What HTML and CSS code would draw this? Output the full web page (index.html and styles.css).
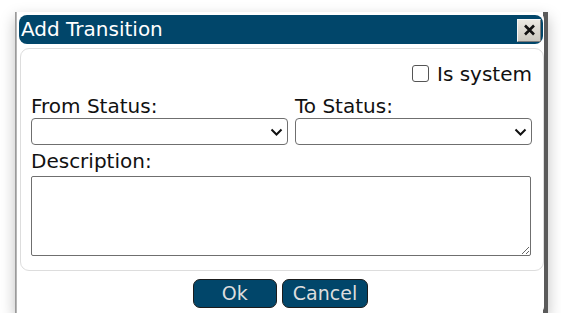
FILE: index.html
```html
<!DOCTYPE html>
<html lang="en">
  <head>
    <meta charset="UTF-8" />
    <title>Add Transition</title>
    <link rel="stylesheet" href="styles.css">
  </head>
  <body>
    <div class="backdrop">
      <div class="dialog">
        <div class="titlebar">
          <span class="title">Add Transition</span>
          <button class="close" title="Close">
            <svg width="13" height="12" viewBox="0 0 13 12">
              <path d="M2 1.5 L11 10.5 M11 1.5 L2 10.5" stroke="#111" stroke-width="2.6" fill="none" />
            </svg>
          </button>
        </div>

        <!-- form area -->
        <div class="panel">
          <div class="system-row">
            <label><input type="checkbox" class="check"> Is system</label>
          </div>
          <div class="status-row">
            <div class="field">
              <label>From Status:</label>
              <div class="select-wrap">
                <select class="select"><option></option></select>
                <svg class="chevron" width="13" height="8" viewBox="0 0 13 8">
                  <path d="M1.5 1.5 L6.5 6.5 L11.5 1.5" stroke="#111" stroke-width="2" fill="none" />
                </svg>
              </div>
            </div>
            <div class="field">
              <label>To Status:</label>
              <div class="select-wrap">
                <select class="select"><option></option></select>
                <svg class="chevron" width="13" height="8" viewBox="0 0 13 8">
                  <path d="M1.5 1.5 L6.5 6.5 L11.5 1.5" stroke="#111" stroke-width="2" fill="none" />
                </svg>
              </div>
            </div>
          </div>
          <label class="desc-label">Description:</label>
          <textarea class="desc"></textarea>
        </div>

        <div class="buttons">
          <button class="btn btn-ok">Ok</button>
          <button class="btn">Cancel</button>
        </div>
      </div>
    </div>
  </body>
</html>
```

FILE: styles.css
```css
body {
  margin: 0;
  padding: 12px 0 0 15px;
  background-color: #fff;
  font-family: "DejaVu Sans", Verdana, sans-serif;
}

.backdrop {
  width: 533px;
  height: 301px;
  background: linear-gradient(to right, #8c8c8c 0, #c4c4c4 2px, #fff 2px, #fff 528px, #5a5a5a 528px);
  box-shadow: 0 6px 14px rgba(0, 0, 0, 0.25);
  display: flex;
}

.dialog {
  box-sizing: border-box;
  margin: 1px 0 0 2px;
  width: 527px;
  height: 300px;
  padding: 2px 0 0 2px;
  background-color: #fff;
  border-radius: 6px;
  display: flex;
  flex-direction: column;
}

.titlebar {
  flex: none;
  height: 29px;
  margin-right: 1px;
  background-color: #01466a;
  border-radius: 8px;
  display: flex;
  align-items: center;
  justify-content: space-between;
  padding: 0 2px 0 2px;
}
.title {
  color: #fff;
  font-size: 20px;
  line-height: 29px;
}
.close {
  width: 24px;
  height: 23px;
  padding: 0;
  margin-top: 1px;
  background: linear-gradient(#ebe9e2, #cbc8bf);
  border: 1px solid #7b7b7b;
  border-top-color: #f6f6f6;
  border-left-color: #f6f6f6;
  display: flex;
  align-items: center;
  justify-content: center;
}

.panel {
  flex: none;
  box-sizing: border-box;
  margin: 4px 0 0 1px;
  height: 223px;
  border: 1px solid #ddd;
  border-radius: 9px;
  padding: 14px 11px 0 10px;
  font-size: 20px;
  color: #111;
}
.panel label {
  display: block;
  line-height: 23px;
}

.system-row {
  display: flex;
  justify-content: flex-end;
  margin-bottom: 9px;
}
.check {
  appearance: none;
  box-sizing: border-box;
  width: 17px;
  height: 17px;
  margin: 0 2px 0 0;
  border: 1.5px solid #555;
  border-radius: 3px;
  vertical-align: -1px;
  background-color: #fff;
}

.status-row {
  display: grid;
  grid-template-columns: 257px 1fr;
  gap: 7px;
  margin-bottom: 5px;
}
.select-wrap {
  position: relative;
}
.select {
  appearance: none;
  display: block;
  box-sizing: border-box;
  width: 100%;
  height: 27px;
  border: 1px solid #6f6f6f;
  border-radius: 4px;
  background-color: #fff;
}
.chevron {
  position: absolute;
  right: 5px;
  top: 10px;
  pointer-events: none;
}

.desc {
  display: block;
  width: 500px;
  height: 80px;
  margin-top: 3px;
  box-sizing: border-box;
  border: 1px solid #6f6f6f;
  border-radius: 2px;
  resize: vertical;
}

.buttons {
  display: flex;
  justify-content: center;
  gap: 5px;
  margin-top: 8px;
  padding-right: 2px;
}
.btn {
  height: 29px;
  min-width: 84px;
  padding: 0 10px;
  background-color: #01466a;
  border: 1px solid #1c1c1c;
  border-radius: 7px;
  color: #ddd;
  font-family: "DejaVu Sans", Verdana, sans-serif;
  font-size: 19px;
  line-height: 27px;
}
```
